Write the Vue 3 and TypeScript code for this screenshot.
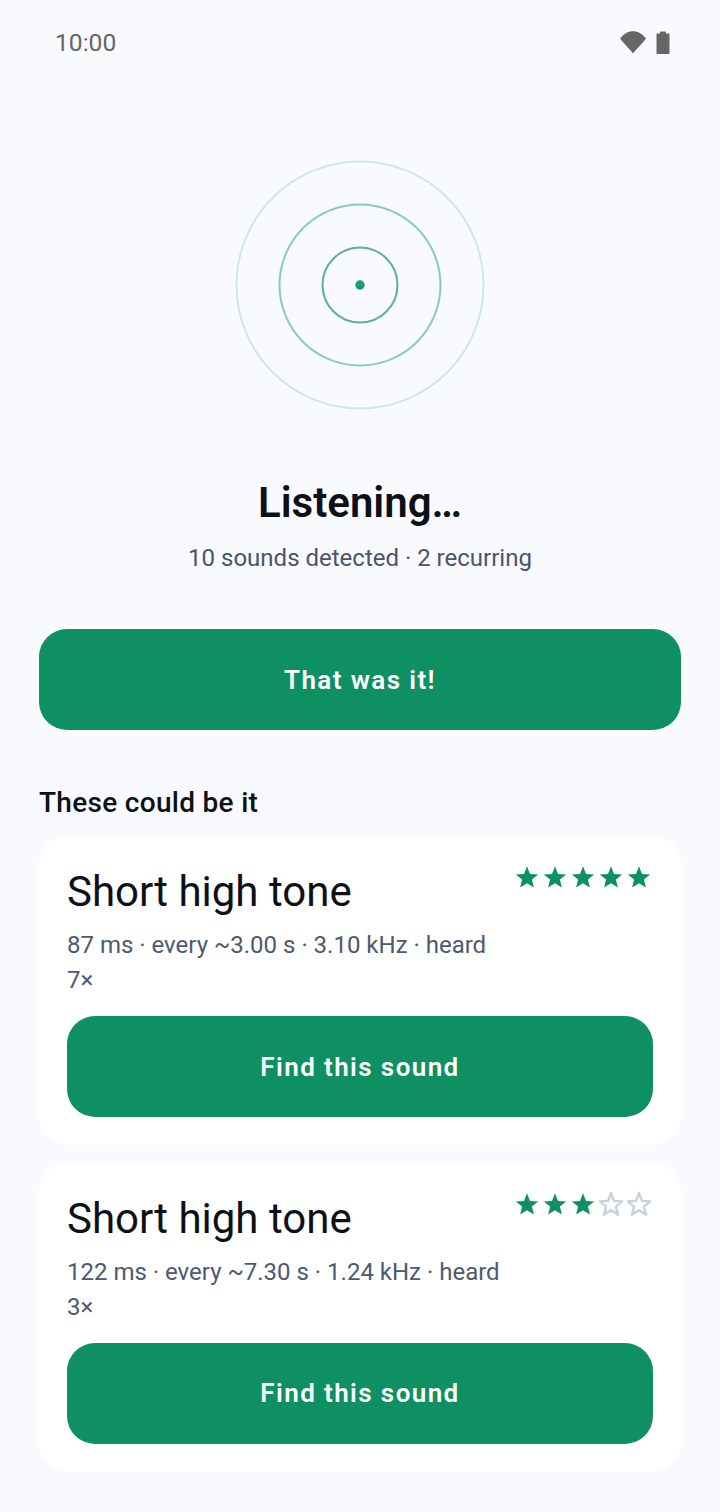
<script setup lang="ts">
interface Sound {
  title: string;
  detail: string;
  stars: number;
}

const sounds: Sound[] = [
  { title: 'Short high tone', detail: '87 ms · every ~3.00 s · 3.10 kHz · heard 7×', stars: 5 },
  { title: 'Short high tone', detail: '122 ms · every ~7.30 s · 1.24 kHz · heard 3×', stars: 3 }
];

const starPoints = '12,1.2 15,8.9 23.2,9.4 16.9,14.6 18.9,22.6 12,18.2 5.1,22.6 7.1,14.6 0.8,9.4 9,8.9';
</script>

<template>
  <div class="screen">
    <header class="status">
      <span class="time">10:00</span>
      <div class="status-icons">
        <svg width="26" height="24" viewBox="0 0 26 24">
          <path d="M13 22.300 0 7.800C3.400 2.900 8 .3 13 .3s9.600 2.600 13 7.500z" fill="#666" />
        </svg>
        <svg width="14" height="24" viewBox="0 0 14 24">
          <path d="M4 1.500c0-.6.400-1 1-1h4c.6 0 1 .4 1 1v1h2.500c.6 0 1 .4 1 1v18.500c0 .6-.4 1-1 1h-11c-.6 0-1-.4-1-1V3.500c0-.6.400-1 1-1H4z" fill="#666" />
        </svg>
      </div>
    </header>

    <div class="radar">
      <svg width="252" height="252" viewBox="0 0 252 252">
        <circle cx="126" cy="126" r="123.500" class="ring ring-outer" />
        <circle cx="126" cy="126" r="80.500" class="ring ring-mid" />
        <circle cx="126" cy="126" r="37.500" class="ring ring-inner" />
        <circle cx="126" cy="126" r="4.700" fill="#1c9a70" />
      </svg>
    </div>

    <h1 class="heading">Listening…</h1>
    <p class="summary">10 sounds detected · 2 recurring</p>

    <button class="action main-action">That was it!</button>

    <h2 class="section-title">These could be it</h2>

    <div class="cards">
      <section v-for="(sound, i) in sounds" :key="i" class="card">
        <div class="card-top">
          <div class="title">{{ sound.title }}</div>
          <div class="stars">
            <svg v-for="n in 5" :key="n" width="24" height="24" viewBox="0 0 24 24">
              <polygon
                :points="starPoints"
                :class="n <= sound.stars ? 'star-full' : 'star-empty'"
              />
            </svg>
          </div>
        </div>
        <p class="detail">{{ sound.detail }}</p>
        <button class="action">Find this sound</button>
      </section>
    </div>
  </div>
</template>

<style>
html,
body {
  margin: 0;
  background: #f9fafe;
}
</style>

<style scoped>
.screen {
  width: 720px;
  height: 1512px;
  box-sizing: border-box;
  padding: 0 39px;
  background: #f9fafe;
  font-family: Roboto, sans-serif;
  color: #0d1117;
  overflow: hidden;
}

.status {
  height: 86px;
  display: flex;
  align-items: center;
  justify-content: space-between;
  padding: 0 11px 0 16px;
}

.time {
  padding-bottom: 2px;
  font-size: 24.6px;
  color: #666;
}

.status-icons {
  display: flex;
  align-items: center;
  gap: 10px;
}

.radar {
  display: flex;
  justify-content: center;
  margin-top: 73px;
}

.ring {
  fill: none;
  stroke-width: 2;
}

.ring-outer {
  stroke: #cfe8e3;
}

.ring-mid {
  stroke: #8accb8;
}

.ring-inner {
  stroke: #5bb396;
}

.heading {
  margin: 66px 0 0;
  font-size: 42px;
  line-height: 52px;
  font-weight: 600;
  text-align: center;
}

.summary {
  margin: 13px 0 0;
  font-size: 24px;
  line-height: 32px;
  color: #4a5568;
  text-align: center;
}

.action {
  display: block;
  width: 100%;
  height: 101px;
  border: none;
  border-radius: 28px;
  background: #0e9063;
  color: #fff;
  font-family: Roboto, sans-serif;
  font-size: 26px;
  font-weight: 600;
  letter-spacing: 1.4px;
}

.main-action {
  margin-top: 55px;
}

.section-title {
  margin: 56px 0 0;
  font-size: 28px;
  line-height: 34px;
  font-weight: 500;
  letter-spacing: 0.3px;
}

.cards {
  display: flex;
  flex-direction: column;
  gap: 17.6px;
  margin-top: 16px;
}

.card {
  background: #fff;
  border-radius: 28px;
  padding: 28px;
}

.card-top {
  display: flex;
  justify-content: space-between;
  align-items: flex-start;
}

.title {
  font-size: 42px;
  line-height: 56px;
}

.stars {
  display: flex;
  gap: 4px;
  margin: 1px 2px 0 0;
}

.star-full {
  fill: #0e9063;
}

.star-empty {
  fill: none;
  stroke: #c9d1dc;
  stroke-width: 2.4;
}

.detail {
  margin: 8px 0 18px;
  width: 440px;
  font-size: 24px;
  line-height: 35px;
  color: #4a5a70;
}
</style>
